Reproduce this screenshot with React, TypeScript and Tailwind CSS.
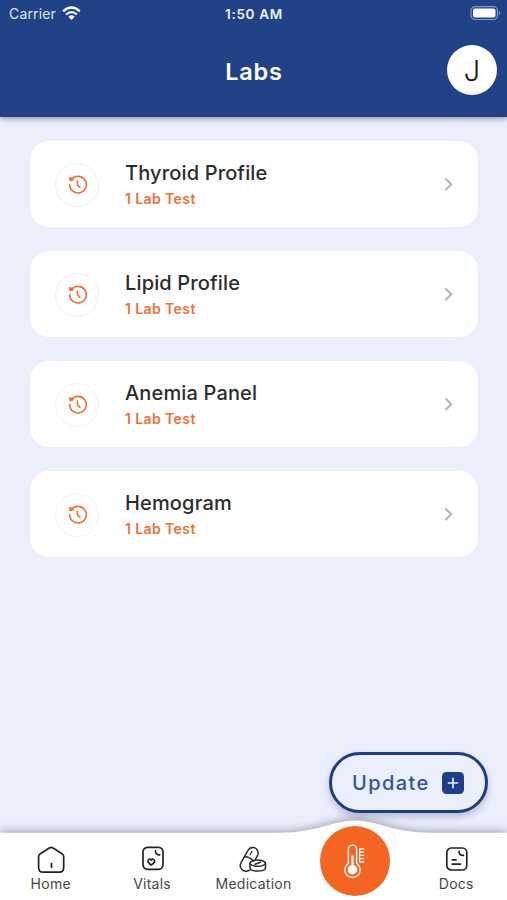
import React from "react";

const labs = ["Thyroid Profile", "Lipid Profile", "Anemia Panel", "Hemogram"];

function StatusBar() {
  return (
    <div className="grid h-7 grid-cols-3 items-center pl-[9px] pr-[6px] text-[13.5px] leading-7">
      <div className="flex items-center gap-[6px] text-[#dfe6f5]">
        <span className="text-[14px] tracking-[0.15px]">Carrier</span>
        <svg width="19" height="15" viewBox="0 0 19 15" className="-mt-[2px]" fill="none" stroke="#fff" strokeWidth="2.3">
          <path d="M1.2 5.3Q9.5 -2.2 17.8 5.3" />
          <path d="M4.1 8.5Q9.5 3.8 14.9 8.5" />
          <path d="M6.4 10.7Q9.5 8 12.6 10.7L9.5 14Z" fill="#fff" stroke="none" />
        </svg>
      </div>
      <span className="-ml-[2px] text-center text-[13.5px] font-semibold tracking-[0.7px] text-[#edf2fc]">1:50 AM</span>
      <svg width="31" height="14" viewBox="0 0 31 14" className="-mt-[2px] justify-self-end">
        <rect x="1" y="0.7" width="26.5" height="12.8" rx="4" fill="none" stroke="#8598c2" strokeWidth="1.2" />
        <rect x="3" y="2.5" width="22.5" height="9" rx="2" fill="#fff" />
        <path d="M29 5Q31.5 7 29 9Z" fill="#8598c2" />
      </svg>
    </div>
  );
}

function HistoryIcon() {
  return (
    <svg width="20" height="20" viewBox="0 0 20 20" className="ml-[1px] mt-[1px]" fill="none" stroke="#ee7138" strokeWidth="1.6" strokeLinecap="round" strokeLinejoin="round">
      <path d="M3 5.2A8.3 8.3 0 1 1 1.7 9.6" />
      <path d="M1.8 2.8L2.3 5.6L5 4.8Z" fill="#ee7138" />
      <path d="M9.4 6V9.2Q9.6 10.8 12 12.4" />
    </svg>
  );
}

function LabCard({ name }: { name: string }) {
  return (
    <li className="flex h-[86px] items-center rounded-[19px] bg-white pl-[25px] pr-[23px]">
      <span className="mt-px flex size-11 items-center justify-center rounded-full border-[1.5px] border-[#f0f1f3]">
        <HistoryIcon />
      </span>
      <div className="ml-[26px] flex-1 pt-px">
        <p className="text-[20px] font-medium leading-[26px] tracking-[0.15px] text-[#2c2c2c]">{name}</p>
        <p className="mt-[3px] text-[14px] font-semibold leading-5 tracking-[0.4px] text-[#ee7138]">1 Lab Test</p>
      </div>
      <svg width="12" height="16" viewBox="0 0 12 16" fill="none" stroke="#b3b3b3" strokeWidth="2">
        <path d="M2.5 2.5L8.2 8.3L2.5 14" />
      </svg>
    </li>
  );
}

function HomeIcon() {
  return (
    <svg width="30" height="30" viewBox="0 0 30 30" fill="none" stroke="#222" strokeWidth="1.7" strokeLinecap="round" strokeLinejoin="round">
      <path d="M2.6 11.8Q2.6 9.8 4.3 8.7L13.3 3Q15.2 1.9 17.1 3L26 8.7Q27.7 9.8 27.7 11.8V22.5Q27.7 27.2 23 27.2H7.3Q2.6 27.2 2.6 22.5Z" />
      <path d="M15.5 18.5V22.3" />
    </svg>
  );
}

function VitalsIcon() {
  return (
    <svg width="30" height="30" viewBox="0 0 30 30" fill="none" stroke="#222" strokeWidth="1.7" strokeLinecap="round" strokeLinejoin="round">
      <rect x="6" y="2.3" width="20" height="22" rx="4.5" />
      <path d="M18.5 5.8Q18.3 9.9 22.7 9.8" />
      <path d="M14.3 20C11.7 18.5 11 17.3 11 16C11 14 13.2 13.6 14.3 15C15.4 13.6 17.7 14 17.7 16C17.7 17.3 16.9 18.5 14.3 20Z" />
    </svg>
  );
}

function MedicationIcon() {
  return (
    <svg width="30" height="30" viewBox="0 0 30 30" fill="none" stroke="#2b2b2b" strokeWidth="1.5" strokeLinecap="round" strokeLinejoin="round">
      <path d="M11.5 25.2Q8 27.4 4.6 25.2Q0.6 22 3.2 17.4L10 5.4A5.3 5.3 0 0 1 19.7 5.9Q20.8 8.3 19.2 11.2L17.3 14.6" />
      <path d="M6.6 11.8Q12 12 15.3 16" />
      <path d="M14 6.4L12 9.8" strokeWidth="1.2" />
      <path d="M12 18.2V22.8C12 27.2 27.5 27.2 27.5 22.8V18.2" />
      <ellipse cx="19.7" cy="18.2" rx="7.7" ry="3.1" />
      <path d="M17 19.2L22.6 17.3" />
    </svg>
  );
}

function DocsIcon() {
  return (
    <svg width="30" height="30" viewBox="0 0 30 30" fill="none" stroke="#222" strokeWidth="1.7" strokeLinecap="round" strokeLinejoin="round">
      <rect x="5.8" y="3" width="20" height="22" rx="4.5" />
      <path d="M18 6.3Q17.8 10.5 22.4 10.4" />
      <path d="M11.3 14.9H15M11.3 19.1H19.5" />
    </svg>
  );
}

function ThermometerIcon() {
  return (
    <svg width="24" height="36" viewBox="0 0 24 36" className="-mt-px" fill="none" stroke="#fff" strokeWidth="1.4">
      <path d="M5.4 20.3V6.2A4.1 4.1 0 0 1 13.6 6.2V20.3A7.7 7.7 0 1 1 5.4 20.3Z" />
      <circle cx="9.5" cy="26.7" r="4.8" fill="#fff" stroke="none" />
      <path d="M9.5 12.5V24" strokeWidth="2.2" />
      <path d="M16 5.8H21.3M16 9.1H20.6M16 12.4H21.3M16 15.7H20.6M16 19H21.3M16.6 5.2V19.6" strokeWidth="1.3" />
    </svg>
  );
}

function Tab({ label, children }: { label: string; children: React.ReactNode }) {
  return (
    <a className="flex flex-col items-center pt-[13px]">
      {children}
      <span className="text-[14px] leading-[18px] tracking-[0.25px] text-[#474747]">{label}</span>
    </a>
  );
}

export default function App() {
  return (
    <div className="flex h-[900px] w-[507px] flex-col overflow-hidden bg-[#ebeffc] font-['Inter',sans-serif]">
      <header className="z-10 h-[117px] shrink-0 bg-[#214287] text-white shadow-[0_2px_5px_rgba(30,35,60,0.4)]">
        <StatusBar />
        <div className="grid h-[84px] grid-cols-[1fr_auto_1fr] items-center pr-[10px]">
          <span />
          <h1 className="ml-[11px] pt-[3px] text-[23.5px] font-semibold tracking-[0.8px]">Labs</h1>
          <span className="flex size-[50px] items-center justify-center justify-self-end rounded-full bg-white pt-[2px] text-[29px] font-light text-[#161616]">J</span>
        </div>
      </header>

      <main className="flex flex-1 flex-col">
        <ul className="flex flex-col gap-6 pl-[30px] pr-[29px] pt-6">
          {labs.map((name) => (
            <LabCard key={name} name={name} />
          ))}
        </ul>
        <button className="mb-[19px] mr-[19px] mt-auto flex h-[61px] w-[159px] items-center justify-between self-end rounded-full border-[3px] border-[#1d3f82] bg-[#ebeffc] pl-5 pr-[21px] shadow-[0_4px_7px_rgba(30,40,80,0.25)]">
          <span className="text-[20px] font-medium tracking-[1.4px] text-[#34549a]">Update</span>
          <svg width="22" height="22" viewBox="0 0 22 22">
            <rect width="22" height="22" rx="4.5" fill="#1d3f88" />
            <path d="M11 5.8V16.2M5.8 11H16.2" stroke="#e5edff" strokeWidth="1.7" />
          </svg>
        </button>
      </main>

      <nav className="relative h-[68px] shrink-0">
        <svg className="absolute -top-[20px] left-0 drop-shadow-[0_-2px_4px_rgba(30,35,55,0.35)]" width="507" height="88" viewBox="0 0 507 88">
          <path d="M0 20.7H280C317 20.7 333 8.5 355 8.5C377 8.5 393 20.7 430 20.7H507V88H0Z" fill="#fff" />
        </svg>
        <div className="relative grid h-full grid-cols-5">
          <Tab label="Home"><HomeIcon /></Tab>
          <Tab label="Vitals"><VitalsIcon /></Tab>
          <Tab label="Medication"><MedicationIcon /></Tab>
          <a className="-mt-[6px] flex size-[70px] items-center justify-center justify-self-center rounded-full bg-[#f46422]">
            <ThermometerIcon />
          </a>
          <Tab label="Docs"><DocsIcon /></Tab>
        </div>
      </nav>
    </div>
  );
}
